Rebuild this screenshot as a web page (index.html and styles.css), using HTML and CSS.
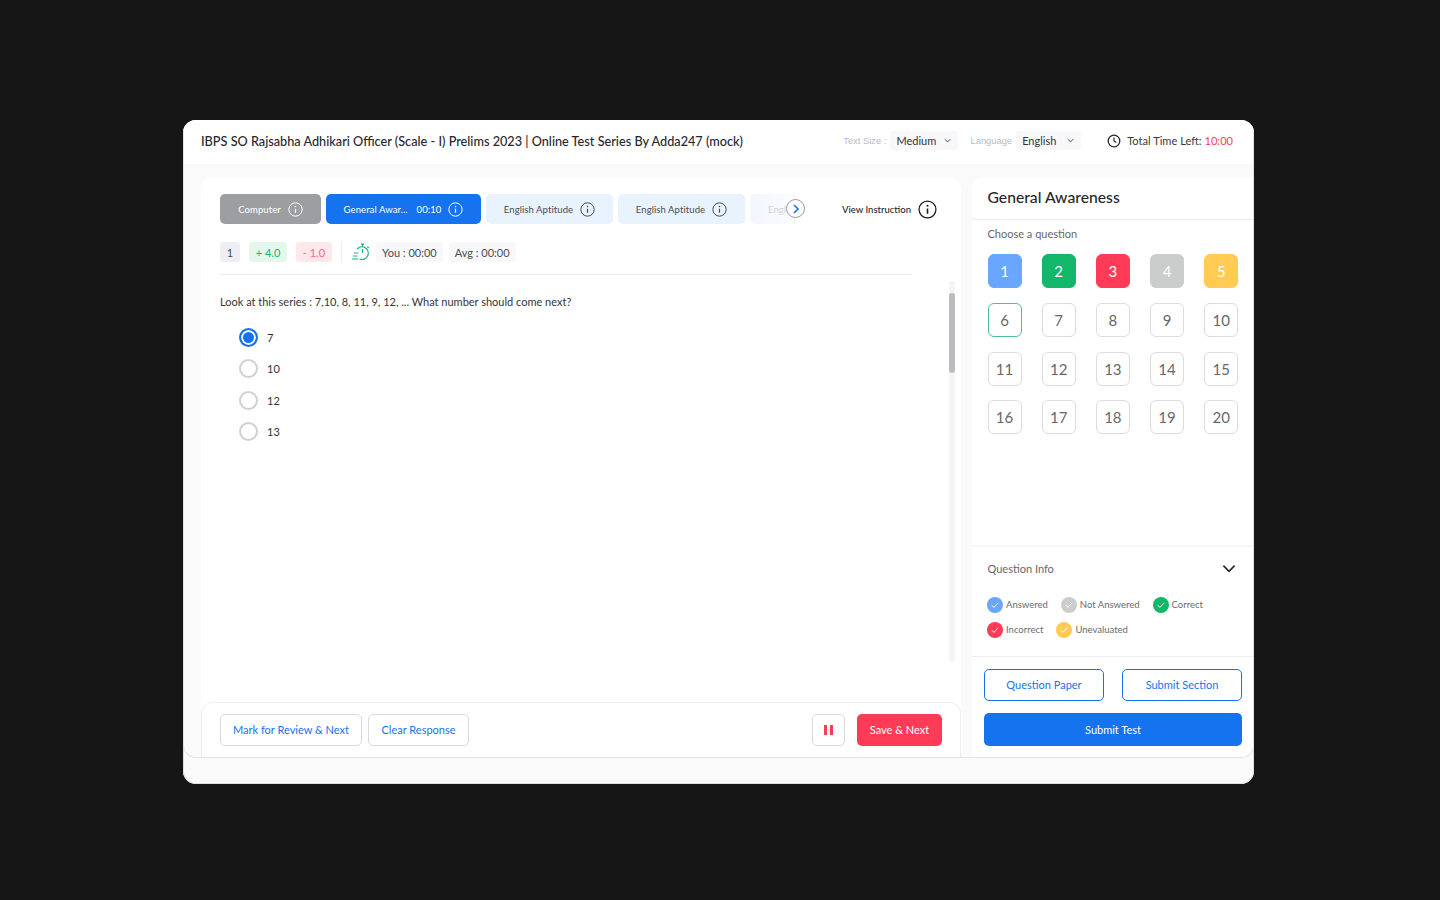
FILE: index.html
```html
<!DOCTYPE html>
<html lang="en">
<head>
  <meta charset="UTF-8">
  <link rel="stylesheet" href="styles.css">
  <title>Online Test</title>
</head>
<body>
  <svg class="sprites" width="0" height="0">
    <symbol id="info" viewBox="0 0 18 18">
      <circle cx="9" cy="9" r="8" fill="none" stroke="currentColor" stroke-width="1.2"/>
      <path d="M9 8v5" fill="none" stroke="currentColor" stroke-width="1.5"/>
      <circle cx="9" cy="5.4" r="1" fill="currentColor"/>
    </symbol>
    <symbol id="chev" viewBox="0 0 10 6">
      <path d="M1 1l4 4 4-4" fill="none" stroke="currentColor" stroke-width="1.2"/>
    </symbol>
    <symbol id="tick" viewBox="0 0 16 16">
      <circle cx="8" cy="8" r="8" fill="currentColor"/>
      <path d="M4.7 8.2l2.2 2.2 4.3-4.6" fill="none" stroke="#fff" stroke-width="1"/>
    </symbol>
  </svg>

  <div class="window">
    <div class="frame">
      <header class="topbar">
        <h1 class="test-title">IBPS SO Rajsabha Adhikari Officer (Scale - I) Prelims 2023 | Online Test Series By Adda247 (mock)</h1>
        <div class="setting setting-size">
          <span class="setting-label">Text Size :</span>
          <span class="select select-size">Medium <svg class="select-chev"><use href="#chev"/></svg></span>
        </div>
        <div class="setting setting-lang">
          <span class="setting-label">Language</span>
          <span class="select select-lang">English <svg class="select-chev"><use href="#chev"/></svg></span>
        </div>
        <div class="time-left">
          <svg class="clock" viewBox="0 0 14 14"><circle cx="7" cy="7" r="5.8" fill="none" stroke="currentColor" stroke-width="1.3"/><path d="M7 3.6V7l2.2 1.6" fill="none" stroke="currentColor" stroke-width="1.2"/></svg>
          <span>Total Time Left: <span class="time-red">10:00</span></span>
        </div>
      </header>

      <div class="main">
        <section class="question-card">
          <div class="tabs-row">
            <div class="tabs">
              <div class="tab tab-done">Computer <svg class="tab-info"><use href="#info"/></svg></div>
              <div class="tab tab-active"><span>General Awar...</span><span class="tab-time">00:10</span> <svg class="tab-info"><use href="#info"/></svg></div>
              <div class="tab tab-idle">English Aptitude <svg class="tab-info"><use href="#info"/></svg></div>
              <div class="tab tab-idle">English Aptitude <svg class="tab-info"><use href="#info"/></svg></div>
              <div class="tab tab-fade">English Aptitude</div>
            </div>
            <div class="tabs-arrow">
              <svg width="8" height="10" viewBox="0 0 8 10"><path d="M2 1l4 4-4 4" fill="none" stroke="#1573f0" stroke-width="1.6"/></svg>
            </div>
            <div class="instruction">View Instruction <svg class="instruction-icon"><use href="#info"/></svg></div>
          </div>

          <div class="meta-row">
            <span class="chip chip-num">1</span>
            <span class="chip chip-plus">+ 4.0</span>
            <span class="chip chip-minus">- 1.0</span>
            <span class="meta-sep"></span>
            <svg class="timer" viewBox="0 0 18 18">
              <path d="M5.200 6A6.300 6.300 0 1 1 7.500 16" fill="none" stroke="#12b76a" stroke-width="1.2"/>
              <path d="M10.500 6V10M9 1.200h3M10.500 1.200V3.700M15.300 3.600l1.400 1.400M2 10h4.500M1 13h4.500M0 16h6" fill="none" stroke="#12b76a" stroke-width="1.2"/>
            </svg>
            <span class="chip chip-time">You : 00:00</span>
            <span class="chip chip-time">Avg : 00:00</span>
          </div>

          <div class="question-body">
            <div class="question-scroll">
              <p class="question-text">Look at this series : 7,10, 8, 11, 9, 12, ... What number should come next?</p>
              <ul class="options">
                <li class="option"><span class="radio radio-on"></span>7</li>
                <li class="option"><span class="radio"></span>10</li>
                <li class="option"><span class="radio"></span>12</li>
                <li class="option"><span class="radio"></span>13</li>
              </ul>
            </div>
            <div class="scrollbar"><div class="scrollbar-thumb"></div></div>
          </div>

          <footer class="actions">
            <button class="btn btn-plain">Mark for Review &amp; Next</button>
            <button class="btn btn-plain">Clear Response</button>
            <button class="btn btn-pause"><svg width="9" height="10" viewBox="0 0 9 10"><path d="M0 0h3v10H0zM6 0h3v10H6z" fill="#ff3b57"/></svg></button>
            <button class="btn btn-save">Save &amp; Next</button>
          </footer>
        </section>

        <aside class="side">
          <div class="side-top">
            <h2 class="side-title">General Awareness</h2>
            <div class="side-pick">Choose a question</div>
            <div class="qgrid">
              <div class="qcell q-blue">1</div>
              <div class="qcell q-green">2</div>
              <div class="qcell q-red">3</div>
              <div class="qcell q-grey">4</div>
              <div class="qcell q-yellow">5</div>
              <div class="qcell q-current">6</div>
              <div class="qcell">7</div>
              <div class="qcell">8</div>
              <div class="qcell">9</div>
              <div class="qcell">10</div>
              <div class="qcell">11</div>
              <div class="qcell">12</div>
              <div class="qcell">13</div>
              <div class="qcell">14</div>
              <div class="qcell">15</div>
              <div class="qcell">16</div>
              <div class="qcell">17</div>
              <div class="qcell">18</div>
              <div class="qcell">19</div>
              <div class="qcell">20</div>
            </div>
          </div>

          <div class="side-info">
            <div class="info-head">
              <span>Question Info</span>
              <svg class="info-chev"><use href="#chev"/></svg>
            </div>
            <div class="legend">
              <span class="legend-item"><svg class="tick t-blue"><use href="#tick"/></svg>Answered</span>
              <span class="legend-item"><svg class="tick t-grey"><use href="#tick"/></svg>Not Answered</span>
              <span class="legend-item"><svg class="tick t-green"><use href="#tick"/></svg>Correct</span>
            </div>
            <div class="legend">
              <span class="legend-item"><svg class="tick t-red"><use href="#tick"/></svg>Incorrect</span>
              <span class="legend-item"><svg class="tick t-yellow"><use href="#tick"/></svg>Unevaluated</span>
            </div>
          </div>

          <div class="side-buttons">
            <button class="btn btn-outline">Question Paper</button>
            <button class="btn btn-outline">Submit Section</button>
            <button class="btn btn-submit">Submit Test</button>
          </div>
        </aside>
      </div>
    </div>
  </div>
</body>
</html>
```

FILE: styles.css
```css
* {
  box-sizing: border-box;
}

html, body {
  height: 100%;
}

body {
  margin: 0;
  padding: 120px 0 0 183px;
  background-color: #161616;
  font-family: Lato, "Open Sans", sans-serif;
  color: #33343a;
  overflow: hidden;
}

button {
  font-family: inherit;
}

.sprites {
  display: block;
}

.window {
  width: 1071px;
  height: 664px;
  background-color: #fafafa;
  border-radius: 13px;
  box-shadow: inset 0 0 0 1px #dedede;
  overflow: hidden;
}

.frame {
  height: 638px;
  border: 1px solid #e3e3e3;
  border-top: 0;
  border-radius: 0 0 13px 13px;
  display: flex;
  flex-direction: column;
  overflow: hidden;
}

/* top bar */
.topbar {
  height: 44px;
  flex: none;
  background-color: #fff;
  display: flex;
  align-items: center;
  padding: 0 20px 3px 17px;
}

.test-title {
  margin: 0;
  font-size: 12.7px;
  font-weight: 500;
  color: #26272c;
  white-space: nowrap;
  flex: 1;
}

.setting {
  display: flex;
  align-items: center;
  gap: 4px;
}

.setting-lang {
  margin-left: 12px;
}

.setting-label {
  font-family: "Liberation Sans", sans-serif;
  font-size: 9.4px;
  color: #b9babd;
}

.select {
  height: 19px;
  background-color: #f8f8fa;
  border-radius: 3px;
  font-size: 11px;
  color: #33343a;
  display: flex;
  align-items: center;
  justify-content: space-between;
  padding: 0 7px 0 6px;
}

.select-size {
  width: 68px;
}

.select-lang {
  width: 65px;
}

.select-chev {
  width: 7px;
  height: 5px;
  color: #33343a;
}

.time-left {
  margin-left: 26px;
  display: flex;
  align-items: center;
  gap: 6px;
  font-size: 11.1px;
  color: #3a3b40;
}

.clock {
  width: 14px;
  height: 14px;
  color: #26272c;
}

.time-red {
  color: #ff3b57;
}

/* main area */
.main {
  flex: 1;
  min-height: 0;
  display: flex;
  gap: 11px;
  padding: 13px 0 0 17px;
}

.question-card {
  width: 760px;
  background-color: #fff;
  border-radius: 12px 12px 0 0;
  display: flex;
  flex-direction: column;
  position: relative;
}

.tabs-row {
  height: 30px;
  margin: 17px 0 0 19px;
  display: flex;
  align-items: center;
  position: relative;
}

.tabs {
  width: 575px;
  display: flex;
  gap: 5px;
  overflow: hidden;
  flex: none;
  border-right: 1px solid #f0f0f0;
}

.tab {
  height: 30px;
  flex: none;
  border-radius: 5px;
  font-size: 9.5px;
  letter-spacing: 0.08px;
  display: flex;
  align-items: center;
  justify-content: center;
  gap: 7px;
  white-space: nowrap;
}

.tab-info {
  width: 15px;
  height: 15px;
}

.tab-done {
  width: 101px;
  background-color: #9d9ea1;
  color: #fff;
}

.tab-active {
  width: 155px;
  background-color: #1573f0;
  color: #fff;
}

.tab-time {
  margin-left: 2px;
}

.tab-idle {
  width: 127px;
  background-color: #e8f3fd;
  color: #4a4b50;
}

.tab-fade {
  width: 127px;
  justify-content: flex-start;
  padding-left: 18px;
  background: linear-gradient(90deg, #f1f7fd, #ffffff 48%);
  color: #d2d3d6;
}

.tabs-arrow {
  position: absolute;
  left: 566px;
  top: 5px;
  width: 19px;
  height: 19px;
  border-radius: 50%;
  border: 1px solid #9a9ba0;
  background-color: #fff;
  display: flex;
  align-items: center;
  justify-content: center;
}

.instruction {
  margin-left: 47px;
  display: flex;
  align-items: center;
  gap: 7px;
  font-size: 9.5px;
  font-weight: 500;
  color: #26272c;
  white-space: nowrap;
}

.instruction-icon {
  width: 19px;
  height: 19px;
  color: #1c1d21;
}

.meta-row {
  height: 20px;
  margin: 18px 0 0 19px;
  display: flex;
  align-items: center;
}

.chip {
  height: 20px;
  border-radius: 3px;
  font-size: 11px;
  display: flex;
  align-items: center;
  justify-content: center;
}

.chip-num {
  width: 20px;
  background-color: #eeeff4;
  color: #4a4b50;
  margin-right: 9px;
}

.chip-plus {
  width: 38px;
  background-color: #e3f7ec;
  color: #12b76a;
  margin-right: 9px;
}

.chip-minus {
  width: 36px;
  background-color: #ffe8eb;
  color: #ff6478;
}

.meta-sep {
  width: 1px;
  height: 20px;
  background-color: #eeeeee;
  margin: 0 9px;
}

.timer {
  width: 18px;
  height: 18px;
  margin-left: 1px;
  margin-right: 6px;
}

.chip-time {
  background-color: #f8f8fa;
  color: #4a4b50;
  padding: 0 6px;
  margin-right: 6px;
}

.question-body {
  flex: 1;
  min-height: 0;
  margin: 12px 6px 0 19px;
  display: flex;
  justify-content: space-between;
}

.question-scroll {
  width: 692px;
  border-top: 1px solid #eeeeee;
}

.question-text {
  margin: 20px 0 0;
  font-size: 11px;
  line-height: 14px;
  color: #33343a;
}

.options {
  list-style: none;
  margin: 19px 0 0 19px;
  padding: 0;
  display: flex;
  flex-direction: column;
  gap: 12.300px;
}

.option {
  height: 19px;
  display: flex;
  align-items: center;
  gap: 9px;
  font-size: 11px;
  color: #33343a;
}

.radio {
  width: 19px;
  height: 19px;
  border-radius: 50%;
  border: 2px solid #d0d1d3;
  background-color: #fff;
}

.radio-on {
  border-color: #1573f0;
  background-color: #1573f0;
  box-shadow: inset 0 0 0 2px #fff;
}

.scrollbar {
  width: 6px;
  height: 381px;
  margin-top: 7px;
  background-color: #f4f4f4;
  border-radius: 3px;
  padding-top: 12px;
}

.scrollbar-thumb {
  height: 80px;
  background-color: #bcbcbf;
  border-radius: 3px;
}

.actions {
  height: 55px;
  flex: none;
  border: 1px solid #eeeeee;
  border-bottom: 0;
  border-radius: 12px 12px 0 0;
  background-color: #fff;
  display: flex;
  align-items: flex-start;
  gap: 6px;
  padding: 11px 18px 0 18px;
}

.btn {
  height: 32px;
  border-radius: 5px;
  font-size: 11px;
  cursor: pointer;
  background-color: #fff;
  padding-bottom: 2px;
}

.btn-plain {
  border: 1px solid #dadadc;
  color: #1573f0;
  padding-left: 12px;
  padding-right: 12px;
}

.btn-plain + .btn-plain {
  padding-left: 12.500px;
  padding-right: 12.500px;
}

.btn-pause {
  width: 33px;
  margin-left: auto;
  border: 1px solid #dadadc;
  padding: 0;
  display: flex;
  align-items: center;
  justify-content: center;
  margin-right: 6px;
}

.btn-save {
  width: 85px;
  border: 0;
  background-color: #ff3b57;
  color: #fff;
}

/* right side */
.side {
  flex: 1;
  min-width: 0;
  display: flex;
  flex-direction: column;
  background-color: #fff;
  border-radius: 12px 0 0 0;
}

.side-top {
  height: 370px;
  flex: none;
  border-bottom: 2px solid #f6f6f6;
}

.side-title {
  margin: 0;
  height: 43px;
  border-bottom: 1px solid #eeeeee;
  padding: 10px 0 0 15.500px;
  font-size: 15.7px;
  line-height: 20px;
  font-weight: 500;
  color: #26272c;
}

.side-pick {
  padding: 7px 0 0 15.500px;
  font-size: 11px;
  line-height: 14px;
  color: #66676c;
}

.qgrid {
  display: grid;
  grid-template-columns: repeat(5, 34px);
  grid-auto-rows: 34px;
  column-gap: 20.200px;
  row-gap: 14.800px;
  padding: 13px 0 0 15.500px;
}

.qcell {
  border: 1px solid #dcdcde;
  border-radius: 6px;
  font-size: 15px;
  color: #66676c;
  display: flex;
  align-items: center;
  justify-content: center;
}

.q-blue {
  background-color: #69a6ff;
  border-color: #69a6ff;
  color: #fff;
}

.q-green {
  background-color: #12b76a;
  border-color: #12b76a;
  color: #fff;
}

.q-red {
  background-color: #ff3b57;
  border-color: #ff3b57;
  color: #fff;
}

.q-grey {
  background-color: #cbcccc;
  border-color: #cbcccc;
  color: #fff;
}

.q-yellow {
  background-color: #ffcb52;
  border-color: #ffcb52;
  color: #fff;
}

.q-current {
  border-color: #4cc28e;
}

.side-info {
  height: 110px;
  flex: none;
  border-bottom: 1px solid #eeeeee;
  padding: 0 0 0 15px;
}

.info-head {
  height: 42px;
  display: flex;
  align-items: center;
  justify-content: space-between;
  padding: 0 17px 0 0.5px;
  font-size: 11px;
  color: #66676c;
}

.info-chev {
  width: 14px;
  height: 9px;
  color: #26272c;
}

.legend {
  display: flex;
  gap: 13px;
  margin-top: 6px;
  height: 19px;
  align-items: center;
}

.legend-item {
  display: flex;
  align-items: center;
  gap: 3px;
  font-size: 9.500px;
  color: #6a6b70;
}

.tick {
  width: 16px;
  height: 16px;
}

.t-blue {
  color: #69a6ff;
}

.t-grey {
  color: #cbcccc;
}

.t-green {
  color: #12b76a;
}

.t-red {
  color: #ff3b57;
}

.t-yellow {
  color: #ffcb52;
}

.side-buttons {
  display: grid;
  grid-template-columns: 120px 120px;
  justify-content: space-between;
  gap: 12px 0;
  width: 258px;
  margin-left: 12px;
  padding-top: 12px;
}

.btn-outline {
  border: 1px solid #1573f0;
  color: #1573f0;
}

.btn-submit {
  grid-column: span 2;
  height: 33px;
  border: 0;
  background-color: #1573f0;
  color: #fff;
}
```
